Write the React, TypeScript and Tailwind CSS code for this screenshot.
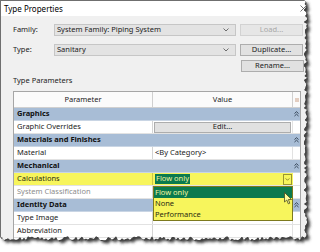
import React from "react";

const rnd = (i: number) => {
  const x = Math.sin(i * 12.9898 + 78.233) * 43758.5453;
  return x - Math.floor(x);
};

function tornPath() {
  const pts: string[] = ["M0,0"];
  for (let y = 0; y <= 238; y += 2) {
    pts.push(`L${(305.5 + (rnd(y) - 0.5) * 3.5).toFixed(1)},${y}`);
  }
  for (let x = 306; x >= 0; x -= 2) {
    pts.push(`L${x},${(238.5 + (rnd(x + 500) - 0.5) * 4).toFixed(1)}`);
  }
  pts.push("Z");
  return pts.join(" ");
}

function TornEdge() {
  const win = tornPath();
  return (
    <svg className="absolute inset-0 pointer-events-none" width="320" height="252" viewBox="0 0 320 252">
      <defs>
        <clipPath id="outside">
          <path clipRule="evenodd" fillRule="evenodd" d={`M0,0 H320 V252 H0 Z ${win}`} />
        </clipPath>
        <filter id="blur" x="-10%" y="-10%" width="120%" height="120%">
          <feGaussianBlur stdDeviation="1.6" />
        </filter>
      </defs>
      <g clipPath="url(#outside)">
        <rect width="320" height="252" fill="#ffffff" />
        <path d={win} transform="translate(3,3)" fill="#3a3a3a" filter="url(#blur)" />
        <path d={win} transform="translate(1,1)" fill="#444444" />
      </g>
    </svg>
  );
}

function Chevron({ className = "" }: { className?: string }) {
  return (
    <svg width="6" height="4" viewBox="0 0 6 4" className={className}>
      <polyline points="0.5,0.5 3,3 5.5,0.5" fill="none" stroke="#606060" strokeWidth="0.9" />
    </svg>
  );
}

function Collapse() {
  return (
    <svg width="5" height="6" viewBox="0 0 5 6">
      <polyline points="0.5,2.5 2.5,0.7 4.5,2.5" fill="none" stroke="#2b3a4d" strokeWidth="0.9" />
      <polyline points="0.5,5 2.5,3.2 4.5,5" fill="none" stroke="#2b3a4d" strokeWidth="0.9" />
    </svg>
  );
}

function Group({ label }: { label: string }) {
  return (
    <div className="h-[13px] flex items-center bg-[#a8bdd6] border-b border-[#c9d5e4]">
      <div className="flex-1 pl-[3px] font-bold text-[#111]">{label}</div>
      <div className="w-[8px] flex justify-center">
        <Collapse />
      </div>
    </div>
  );
}

function Row({ label, value, muted }: { label: string; value?: React.ReactNode; muted?: boolean }) {
  return (
    <div className="h-[13px] flex border-b border-[#e2e2e2]">
      <div className={`w-[139px] pl-[3px] flex items-center border-r border-[#d4d4d4] ${muted ? "text-[#8c8c8c]" : "text-[#1a1a1a]"}`}>
        {label}
      </div>
      <div className="w-[140px] flex items-center border-r border-[#e2e2e2]">{value}</div>
      <div className="flex-1" />
    </div>
  );
}

export default function App() {
  return (
    <div className="relative w-[320px] h-[252px] bg-white overflow-hidden font-['Noto_Sans',sans-serif] text-[7.5px] leading-none">
      <div className="w-[312px] h-[252px] border-l border-t border-[#6f6f6f] bg-[#f0f0f0] flex flex-col">
        <div className="h-[15px] bg-white flex items-center pl-[3px]">
          <span className="text-[8px] text-black">Type Properties</span>
          <svg width="7" height="7" viewBox="0 0 7 7" className="ml-auto mr-[5px]">
            <path d="M0.5,0.5 L6.5,6.5 M6.5,0.5 L0.5,6.5" stroke="#505050" strokeWidth="0.8" />
          </svg>
        </div>
        <div className="pl-[12px] pt-[8px] flex flex-col text-[#222]">
          <div className="h-[12px] flex items-center">
            <div className="w-[41px]">Family:</div>
            <div className="w-[182px] h-full bg-[#e3e3e3] border border-[#c6c6c6] flex items-center pl-[2px] pr-[6px]">
              <span>System Family: Piping System</span>
              <Chevron className="ml-auto" />
            </div>
            <div className="ml-[4px] w-[63px] h-full bg-[#e6e6e6] border border-[#d2d2d2] flex items-center justify-center text-[#a8a8a8]">
              Load...
            </div>
          </div>
          <div className="mt-[8px] h-[12px] flex items-center">
            <div className="w-[41px]">Type:</div>
            <div className="w-[182px] h-full bg-[#e3e3e3] border border-[#c6c6c6] flex items-center pl-[2px] pr-[6px]">
              <span>Sanitary</span>
              <Chevron className="ml-auto" />
            </div>
            <div className="ml-[4px] w-[63px] h-full bg-[#e1e1e1] border border-[#adadad] flex items-center justify-center">
              Duplicate...
            </div>
          </div>
          <div className="mt-[4px] h-[12px] flex justify-end pr-[8px]">
            <div className="w-[63px] h-full bg-[#e1e1e1] border border-[#adadad] flex items-center justify-center">
              Rename...
            </div>
          </div>
          <div className="mt-[4px] h-[9px] flex items-center">Type Parameters</div>
          <div className="mt-[6px] w-[288px] border border-[#a6a6a6] bg-white">
            <div className="h-[16px] flex border-b border-[#d0d0d0] bg-[#fbfbfb]">
              <div className="w-[139px] flex items-center justify-center border-r border-[#d0d0d0]">Parameter</div>
              <div className="w-[140px] flex items-center justify-center border-r border-[#d0d0d0]">Value</div>
              <div className="flex-1 flex items-center justify-center">
                <svg width="4" height="4" viewBox="0 0 4 4">
                  <path d="M0,1 H4 M0,3 H4" stroke="#c08a6a" strokeWidth="0.8" />
                </svg>
              </div>
            </div>
            <Group label="Graphics" />
            <Row
              label="Graphic Overrides"
              value={
                <div className="mx-[1px] w-full h-[11px] bg-[#e1e1e1] border border-[#adadad] flex items-center justify-center">
                  Edit...
                </div>
              }
            />
            <Group label="Materials and Finishes" />
            <Row label="Material" value={<span className="pl-[2px]">&lt;By Category&gt;</span>} />
            <Group label="Mechanical" />
            <div className="h-[13px] flex border-b border-[#e2e2e2]">
              <div className="w-[139px] pl-[3px] flex items-center bg-[#f7f55c] border-r border-[#c9c64a] text-[#2a2a10]">
                Calculations
              </div>
              <div className="w-[140px] flex items-center bg-[#f7f55c] pl-[2px] pr-[1px]">
                <span className="bg-[#0b7a4e] text-[#f4f4a0] px-[1px] h-[10px] flex items-center">Flow only</span>
                <div className="ml-auto w-[9px] h-[11px] border border-[#9a9630] flex items-center justify-center">
                  <svg width="5" height="3" viewBox="0 0 6 4">
                    <polyline points="0.5,0.5 3,3 5.5,0.5" fill="none" stroke="#6b6820" strokeWidth="1" />
                  </svg>
                </div>
              </div>
              <div className="flex-1" />
            </div>
            <Row label="System Classification" muted />
            <Group label="Identity Data" />
            <Row label="Type Image" />
            <Row label="Abbreviation" />
            <Row label="Description" />
          </div>
        </div>
      </div>

      <div className="absolute left-[153px] top-[186px] w-[140px] h-[35px] bg-[#f7f55c] border border-[#7d7a1e] flex flex-col text-[#2a2a10]">
        <div className="h-[11px] bg-[#0b7a4e] text-[#f4f4a0] flex items-center pl-[1px]">Flow only</div>
        <div className="h-[11px] flex items-center pl-[1px]">None</div>
        <div className="h-[11px] flex items-center pl-[1px]">Performance</div>
      </div>

      <svg className="absolute left-[284px] top-[192px]" width="9" height="13" viewBox="0 0 9 13">
        <path d="M0.5,0.5 L0.5,10 L2.8,8 L4.3,11.8 L5.8,11.2 L4.4,7.5 L7.5,7.5 Z" fill="#fbfb9a" stroke="#4a4a20" strokeWidth="0.8" strokeLinejoin="round" />
      </svg>

      <TornEdge />
    </div>
  );
}
